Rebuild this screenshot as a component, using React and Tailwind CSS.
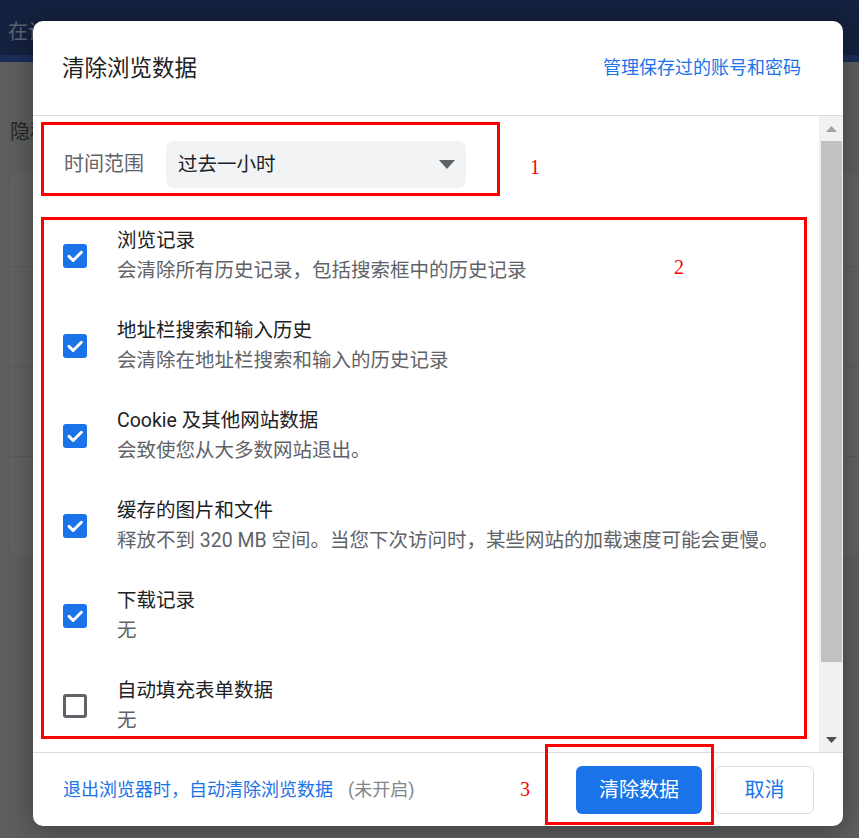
import React from 'react';

const items = [
    { title: '浏览记录', desc: '会清除所有历史记录，包括搜索框中的历史记录', checked: true },
    { title: '地址栏搜索和输入历史', desc: '会清除在地址栏搜索和输入的历史记录', checked: true },
    { title: 'Cookie 及其他网站数据', desc: '会致使您从大多数网站退出。', checked: true },
    { title: '缓存的图片和文件', desc: '释放不到 320 MB 空间。当您下次访问时，某些网站的加载速度可能会更慢。', checked: true },
    { title: '下载记录', desc: '无', checked: true },
    { title: '自动填充表单数据', desc: '无', checked: false },
];

const Checkbox = ({ checked }) => {
    if (!checked) {
        return <div className="w-[24px] h-[24px] rounded-[3px] border-[3px] border-[#5f6368] shrink-0"></div>;
    }
    return (
        <div className="w-[24px] h-[24px] rounded-[3px] bg-[#1a73e8] flex items-center justify-center shrink-0">
            <svg width="18" height="18" viewBox="0 0 24 24" fill="none">
                <path d="M4 12.5l5.5 5.5L20.5 7" stroke="white" strokeWidth="4" strokeLinecap="round" strokeLinejoin="round" />
            </svg>
        </div>
    );
};

const App = () => {
    return (
        <div className="relative w-full h-[838px] overflow-hidden bg-[#5d5e5e] font-['Roboto','Noto_Sans_CJK_SC',sans-serif]">

            {/* Page behind the dialog (dimmed) */}
            <header className="h-[62px] bg-[#15213f] border-b-[7px] border-[#1b2d59] flex items-start pt-[20px] pl-[8px]">
                <span className="text-[20px] leading-[24px] text-[#5b6374]">在设置中搜索</span>
            </header>
            <div className="pl-[10px] pt-[58px]">
                <p className="text-[20px] leading-[24px] text-[#262727]">隐私设置和安全性</p>
                <div className="mt-[28px] h-[385px] rounded-[12px] bg-[#616262] flex flex-col">
                    <div className="h-[95px] border-b border-[#595a5a]"></div>
                    <div className="h-[100px] border-b border-[#595a5a]"></div>
                    <div className="h-[90px] border-b border-[#595a5a]"></div>
                </div>
            </div>

            {/* Dialog */}
            <div className="absolute left-[33px] top-[21px] w-[810px] h-[805px] bg-white rounded-[10px] shadow-[0_4px_28px_rgba(0,0,0,0.35)] flex flex-col overflow-hidden">
                <div className="h-[95px] shrink-0 flex items-center justify-between pl-[29px] pr-[42px] border-b border-[#dadce0]">
                    <h1 className="text-[22.5px] leading-none text-[#202124]">清除浏览数据</h1>
                    <a className="text-[18px] leading-none text-[#1a73e8]">管理保存过的账号和密码</a>
                </div>

                <div className="flex flex-1 min-h-0">
                    <div className="flex-1 pl-[8px] pt-[6px]">
                        {/* Time range */}
                        <div className="w-[459px] h-[74px] border-[3px] border-[#ff0000] flex items-start pt-[16px] pl-[20px]">
                            <span className="w-[102px] text-[20px] leading-[47px] text-[#5f6368]">时间范围</span>
                            <div className="w-[300px] h-[47px] rounded-[8px] bg-[#f1f3f4] flex items-center justify-between pl-[12px] pr-[11px]">
                                <span className="text-[19.5px] leading-none text-[#202124]">过去一小时</span>
                                <svg width="16" height="9" viewBox="0 0 16 9">
                                    <path d="M0 0h16L8 9z" fill="#5f6368" />
                                </svg>
                            </div>
                        </div>

                        {/* Data types */}
                        <div className="mt-[21px] w-[766px] h-[522px] border-[3px] border-[#ff0000] flex flex-col gap-[30px] pt-[6px] pl-[19px]">
                            {items.map((item) => (
                                <div key={item.title} className="flex items-center">
                                    <Checkbox checked={item.checked} />
                                    <div className="ml-[30px] flex flex-col">
                                        <span className="text-[19.5px] leading-[30px] text-[#202124]">{item.title}</span>
                                        <span className="text-[19.5px] leading-[30px] text-[#5f6368]">{item.desc}</span>
                                    </div>
                                </div>
                            ))}
                        </div>
                    </div>

                    {/* Scrollbar */}
                    <div className="w-[24px] shrink-0 bg-[#f1f1f1] flex flex-col">
                        <div className="h-[25px] flex items-center justify-center">
                            <svg width="11" height="6" viewBox="0 0 11 6"><path d="M0 6h11L5.5 0z" fill="#a3a3a3" /></svg>
                        </div>
                        <div className="ml-[2px] w-[21px] h-[521px] bg-[#c1c1c1]"></div>
                        <div className="flex-1"></div>
                        <div className="h-[25px] flex items-center justify-center">
                            <svg width="11" height="6" viewBox="0 0 11 6"><path d="M0 0h11L5.5 6z" fill="#505050" /></svg>
                        </div>
                    </div>
                </div>

                <div className="h-[74px] shrink-0 border-t border-[#dadce0] flex items-center justify-between pl-[30px] pr-[29px]">
                    <div className="flex items-center">
                        <a className="text-[18px] leading-none text-[#1a73e8]">退出浏览器时，自动清除浏览数据</a>
                        <span className="ml-[15px] text-[18px] leading-none text-[#80868b]">(未开启)</span>
                    </div>
                    <div className="flex items-center gap-[13px]">
                        <button className="w-[126px] h-[48px] rounded-[6px] bg-[#1a73e8] text-white text-[20px]">清除数据</button>
                        <button className="w-[99px] h-[48px] rounded-[6px] border border-[#dadce0] bg-white text-[#1a73e8] text-[20px]">取消</button>
                    </div>
                </div>
            </div>

            {/* Annotations */}
            <span className="absolute left-[530px] top-[156px] text-[20px] leading-[22px] text-[#ff0000] font-['Liberation_Serif',serif]">1</span>
            <span className="absolute left-[674px] top-[256px] text-[20px] leading-[22px] text-[#ff0000] font-['Liberation_Serif',serif]">2</span>
            <span className="absolute left-[520px] top-[778px] text-[20px] leading-[22px] text-[#ff0000] font-['Liberation_Serif',serif]">3</span>
            <div className="absolute left-[545px] top-[744px] w-[169px] h-[81px] border-[3px] border-[#ff0000]"></div>
        </div>
    );
};

export default App;
